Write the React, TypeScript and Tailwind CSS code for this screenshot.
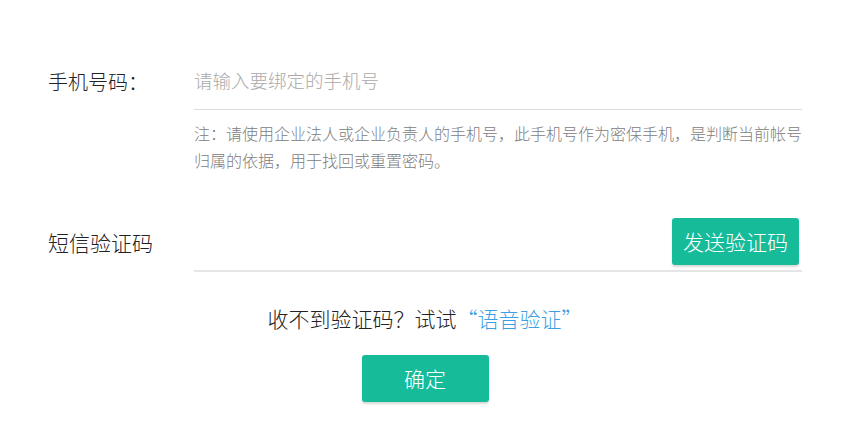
import React from 'react';

export default function App() {
  return (
    <div className="w-[865px] h-[423px] bg-white font-['Noto_Sans_CJK_SC','Noto_Sans',sans-serif] font-light text-[#222]">
      <div className="ml-12 w-[754px] pt-[53px]">
        {/* Phone number */}
        <div className="flex">
          <div className="w-[146px] h-[57px] flex items-center text-[20px]">手机号码：</div>
          <div className="flex-1 h-[57px] flex items-center border-b border-[#dcdcdc] text-[18.5px] text-[#aaa]">
            请输入要绑定的手机号
          </div>
        </div>
        <p className="ml-[146px] mt-[10px] text-[16px] leading-[27px] text-[#808080] whitespace-nowrap">
          注：请使用企业法人或企业负责人的手机号，此手机号作为密保手机，是判断当前帐号
          <br />
          归属的依据，用于找回或重置密码。
        </p>

        {/* SMS code */}
        <div className="flex mt-[40px]">
          <div className="w-[146px] h-[58px] flex items-center text-[21px]">短信验证码</div>
          <div className="flex-1 h-[58px] flex items-end justify-end border-b-2 border-[#e6e6e6]">
            <button className="mb-[5px] mr-[3px] w-[127px] h-[47px] rounded-[3px] bg-[#16bb9a] text-white text-[21px] font-light shadow-[0_2px_2px_rgba(0,0,0,0.15)]">
              发送验证码
            </button>
          </div>
        </div>

        <div className="mt-[31px] h-[30px] leading-[30px] text-center text-[21px]">
          收不到验证码？试试<span className="text-[#3d9fe3]">“语音验证”</span>
        </div>

        <div className="mt-[22px] flex justify-center">
          <button className="w-[127px] h-[47px] rounded-[3px] bg-[#16bb9a] text-white text-[21px] font-light shadow-[0_2px_2px_rgba(0,0,0,0.15)]">
            确定
          </button>
        </div>
      </div>
    </div>
  );
}
